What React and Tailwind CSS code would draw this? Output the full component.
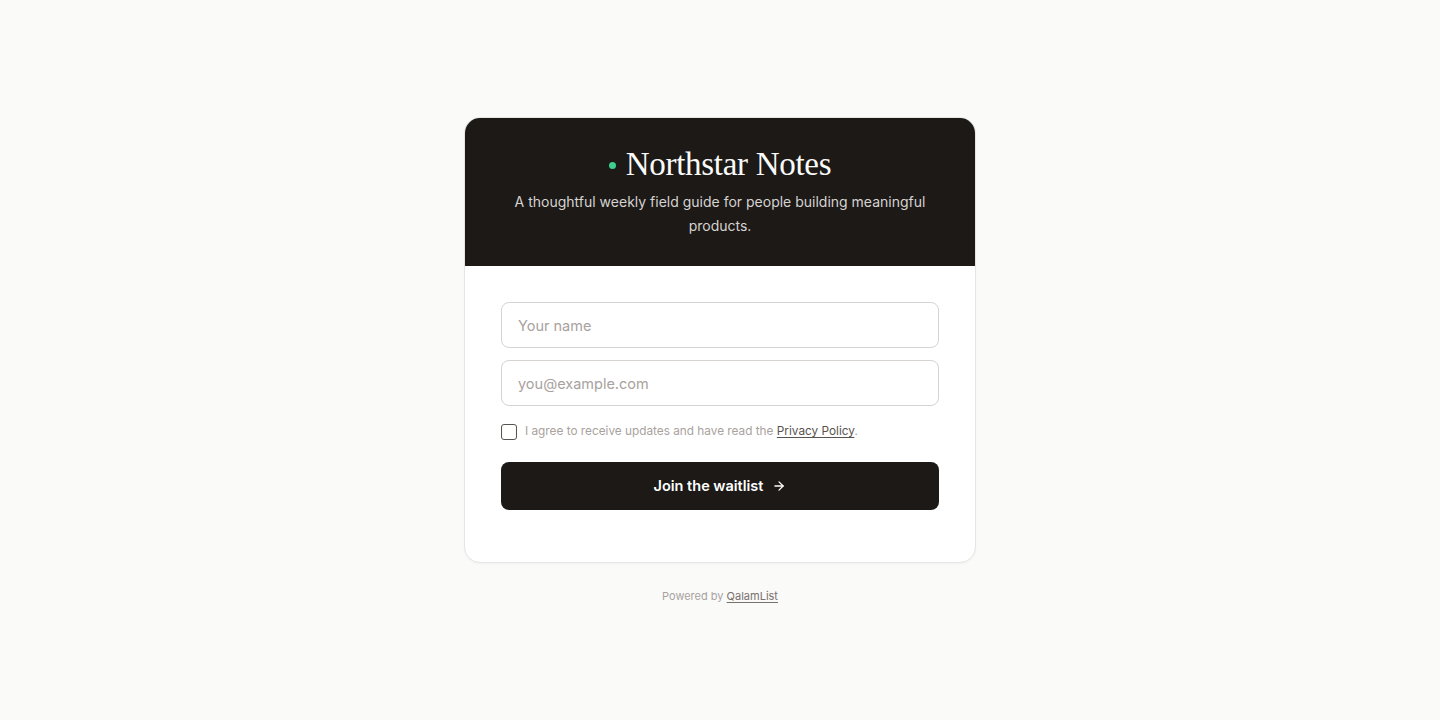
import React from "react";

export default function App() {
  return (
    <div
      className="min-h-screen w-full bg-[#fafaf9] flex flex-col items-center justify-center pt-[2px]"
      style={{ fontFamily: "Inter, 'Noto Sans', sans-serif" }}
    >
      <div className="w-[512px] rounded-2xl border border-[#e7e5e4] bg-white overflow-hidden shadow-[0_1px_2px_rgba(0,0,0,0.04)]">
        <div className="bg-[#1c1917] px-10 pt-7 pb-7 text-center">
          <div className="flex items-center justify-center gap-[10px]">
            <span className="block w-[7px] h-[7px] rounded-full bg-[#3ecf8e] mt-[3px]" />
            <h1
              className="text-[33px] leading-[36px] text-[#fafaf9]"
              style={{ fontFamily: "'Liberation Serif', 'Times New Roman', serif", letterSpacing: "-0.3px" }}
            >
              Northstar Notes
            </h1>
          </div>
          <p className="mt-2 text-[14px] leading-6 text-[#d6d3d1]">
            A thoughtful weekly field guide for people building meaningful products.
          </p>
        </div>
        <div className="px-9 pt-9 pb-[52px]">
          <input
            className="block w-full h-[46px] rounded-lg border border-[#d6d3d1] px-4 text-[14.5px] text-[#1c1917] placeholder:text-[#a8a29e] outline-none"
            placeholder="Your name"
          />
          <input
            className="mt-3 block w-full h-[46px] rounded-lg border border-[#d6d3d1] px-4 text-[14.5px] text-[#1c1917] placeholder:text-[#a8a29e] outline-none"
            placeholder="you@example.com"
          />
          <label className="mt-[17px] flex items-center gap-2">
            <span className="block w-4 h-4 rounded-[3px] border border-[#57534e] bg-white" />
            <span className="text-[11.8px] text-[#a8a29e]">
              I agree to receive updates and have read the{" "}
              <a className="text-[#57534e] underline underline-offset-2">Privacy Policy</a>.
            </span>
          </label>
          <button className="mt-[21px] w-full h-12 rounded-lg bg-[#1c1917] text-white text-[14.5px] font-semibold flex items-center justify-center gap-[9px]">
            Join the waitlist
            <svg width="14" height="14" viewBox="0 0 24 24" fill="none" stroke="currentColor" strokeWidth="2.2" strokeLinecap="round" strokeLinejoin="round">
              <path d="M5 12h14" />
              <path d="M12 5l7 7-7 7" />
            </svg>
          </button>
        </div>
      </div>
      <p className="mt-[25px] text-[11px] text-[#a8a29e]">
        Powered by <a className="text-[#78716c] underline underline-offset-2">QalamList</a>
      </p>
    </div>
  );
}
